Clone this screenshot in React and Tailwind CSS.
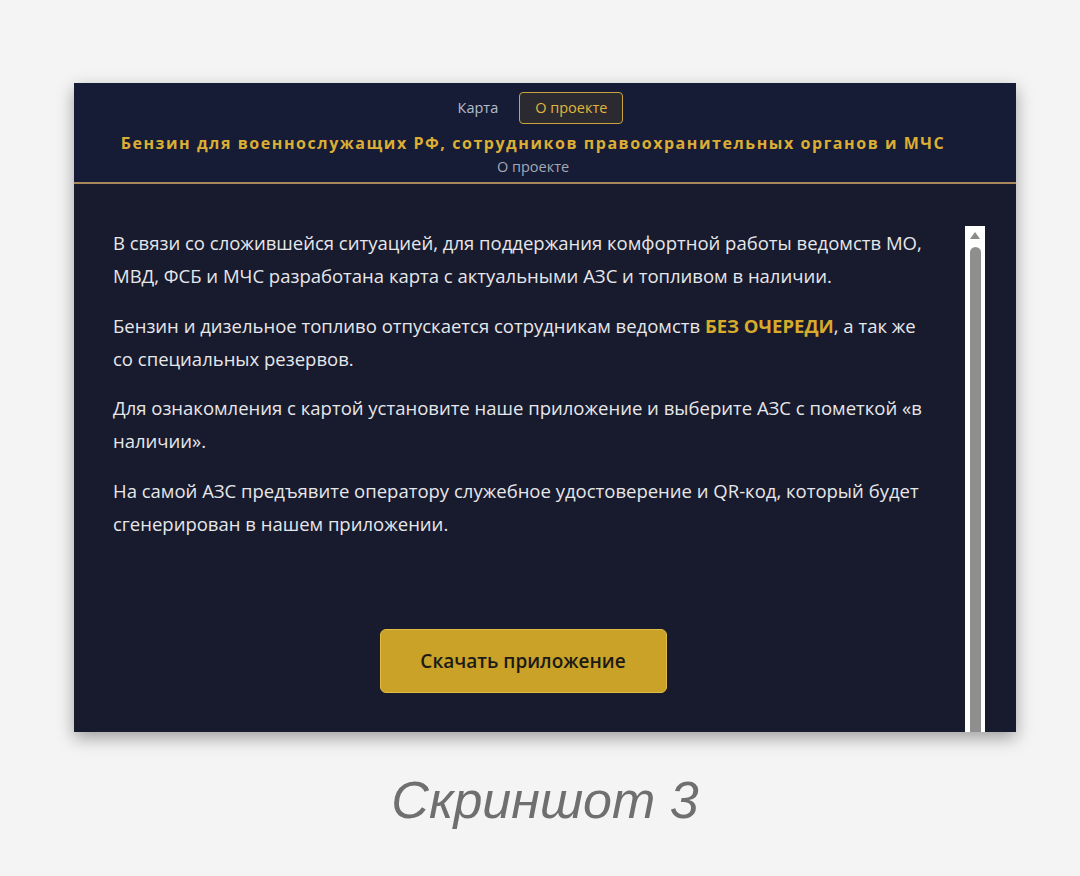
import React from 'react';

const paragraphs = [
  <>В связи со сложившейся ситуацией, для поддержания комфортной работы ведомств МО, МВД, ФСБ и МЧС разработана карта с актуальными АЗС и топливом в наличии.</>,
  <>Бензин и дизельное топливо отпускается сотрудникам ведомств <span className="font-bold text-[#d9ab2c]">БЕЗ ОЧЕРЕДИ</span>, а так же со специальных резервов.</>,
  <>Для ознакомления с картой установите наше приложение и выберите АЗС с пометкой «в наличии».</>,
  <>На самой АЗС предъявите оператору служебное удостоверение и QR-код, который будет сгенерирован в нашем приложении.</>,
];

const Scrollbar = () => (
  <div className="w-[20px] shrink-0 h-full bg-white flex flex-col items-center pt-[6px]">
    <div className="w-0 h-0 border-l-[5px] border-r-[5px] border-b-[7px] border-l-transparent border-r-transparent border-b-[#8a8a8a]" />
    <div className="mt-[8px] w-[11px] flex-grow bg-[#8f8f8f] rounded-t-full" />
  </div>
);

export default function App() {
  return (
    <div className="min-h-[876px] w-[1080px] bg-[#f4f4f4] pt-[83px] font-['Open_Sans',sans-serif]">
      <div className="ml-[74px] w-[942px] h-[649px] flex flex-col bg-[#181a2d] shadow-[0_6px_16px_rgba(0,0,0,0.35)]">
        <header className="bg-[#161c36] border-b-2 border-[#a8875c] pt-[9px] pb-[4px] pr-[24px] flex flex-col items-center">
          <nav className="flex items-center gap-[21px] text-[14.5px] ml-[15px]">
            <span className="text-[#b4bccb]">Карта</span>
            <span className="px-[15px] h-[32px] flex items-center rounded-[4px] border border-[#c9a440] bg-[#2a2a30] text-[#e2b53c]">О проекте</span>
          </nav>
          <h1 className="mt-[7px] text-[16px] font-bold tracking-[1.55px] text-[#dcae34] leading-[24px]">
            Бензин для военнослужащих РФ, сотрудников правоохранительных органов и МЧС
          </h1>
          <p className="mt-[1px] text-[14.5px] text-[#a3a9b5] leading-[22px]">О проекте</p>
        </header>
        <main className="flex-grow flex min-h-0 pt-[42px] pr-[31px]">
          <div className="flex-grow flex flex-col pl-[39px] pr-[30px]">
            {paragraphs.map((p, i) => (
              <p key={i} className="text-[18.5px] leading-[33.3px] text-[#e6e7ea] mb-[16px]">{p}</p>
            ))}
            <div className="flex justify-center mt-[73px] pr-[2px]">
              <button className="w-[287px] h-[64px] rounded-[6px] bg-[#c9a227] border border-[#e0bb45] text-[#1b1a17] text-[19px] font-semibold">
                Скачать приложение
              </button>
            </div>
          </div>
          <Scrollbar />
        </main>
      </div>
      <div className="ml-[74px] w-[942px] text-center mt-[38px] text-[52px] leading-[60px] italic text-[#6f6f6f] font-['Liberation_Sans',sans-serif]">
        Скриншот 3
      </div>
    </div>
  );
}
